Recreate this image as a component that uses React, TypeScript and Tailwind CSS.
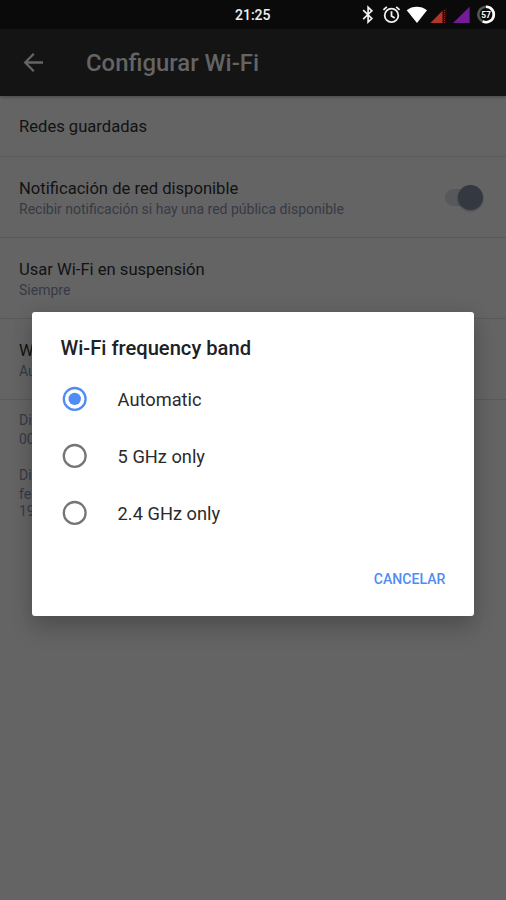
import type { ReactNode } from "react";

function StatusIcons() {
  return (
    <div className="flex h-full items-center">
      <svg width="14" height="20" viewBox="0 0 14 20" fill="none" stroke="#f2f2f2" strokeWidth="1.7">
        <path d="M2.2 5.2 10.8 13.5 7.1 17V2.2L10.8 5.8 2.2 14.1" />
      </svg>
      <svg className="ml-[7px]" width="20" height="20" viewBox="0 0 20 20" fill="none" stroke="#f2f2f2" strokeWidth="1.8">
        <circle cx="9.5" cy="10.4" r="6.8" />
        <path d="M9.5 6.2v4.7l3.2 2M1.4 4.8 4.8 1.8M17.6 4.8 14.2 1.8" />
      </svg>
      <svg className="ml-[4px]" width="22" height="20" viewBox="0 0 22 20">
        <path d="M0.7 5.2C6.5 0.6 15 0.6 21 5.2L11 18Z" fill="#fff" />
      </svg>
      <svg className="ml-[2px]" width="18" height="20" viewBox="0 0 18 20">
        <path d="M16.5 1.8V18H0.3Z" fill="#1f100e" />
        <path d="M12.5 5.8V18H0.3Z" fill="#b53327" />
        <path d="M14.5 5v13" stroke="#8a281f" strokeWidth="1" strokeDasharray="1 1" />
      </svg>
      <svg className="ml-[5px]" width="18" height="20" viewBox="0 0 18 20">
        <path d="M16.6 1.8V18H0Z" fill="#721c96" />
      </svg>
      <svg className="ml-[5px]" width="20" height="20" viewBox="0 0 20 20">
        <circle cx="10" cy="9.5" r="7.7" fill="none" stroke="#555" strokeWidth="2.6" />
        <path d="M10 1.8a7.7 7.7 0 1 1-3.3 14.6" fill="none" stroke="#fff" strokeWidth="2.6" />
        <text x="10" y="12.5" textAnchor="middle" fill="#fff" fontSize="8.4" fontWeight="700" fontFamily="Roboto, sans-serif">57</text>
      </svg>
    </div>
  );
}

function Setting({ title, summary, children }: { title: string; summary?: string; children?: ReactNode }) {
  return (
    <div className={`flex items-center justify-between border-b border-[#595959] pt-[2px] pr-[22px] pl-[19px] ${summary ? "h-[81px]" : "h-[61px]"}`}>
      <div>
        <div className="text-[16.6px] leading-[22px] whitespace-nowrap text-[#111214]">{title}</div>
        {summary && <div className="text-[14px] leading-[19px] text-[#363a45]">{summary}</div>}
      </div>
      {children}
    </div>
  );
}

function Option({ label, checked = false }: { label: string; checked?: boolean }) {
  return (
    <div className="flex h-[57px] items-center">
      <svg width="26" height="26" viewBox="0 0 26 26" fill="none">
        <circle cx="12.7" cy="12.9" r="10.9" stroke={checked ? "#4f8df5" : "#757575"} strokeWidth="2.3" />
        {checked && <circle cx="12.7" cy="12.9" r="6.2" fill="#4f8df5" />}
      </svg>
      <span className="ml-[29.6px] pt-[2px] text-[18.25px] leading-[24px] text-[#2a2b2d]">{label}</span>
    </div>
  );
}

export default function App() {
  return (
    <div className="relative h-[900px] w-[506px] overflow-hidden bg-[#646464] font-['Roboto',sans-serif] antialiased">
      <div className="relative flex h-[29px] items-center justify-end bg-[#0a0a0a] pr-[10px]">
        <span className="absolute left-[235px] text-[14px] leading-[18px] font-medium text-[#f0f0f0]">21:25</span>
        <StatusIcons />
      </div>
      <header className="flex h-[67px] items-center bg-[#141414] pl-[23px] shadow-[0_1px_3px_rgba(0,0,0,0.3)]">
        <svg width="20" height="20" viewBox="0 0 20 20" fill="none" stroke="#646464" strokeWidth="2.3">
          <path d="M20 9.5H2.5M10.8 0.8 2.2 9.5l8.6 8.7" />
        </svg>
        <h1 className="ml-[43px] text-[23.9px] leading-[30px] font-medium text-[#646464]">Configurar Wi-Fi</h1>
      </header>
      <main>
        <Setting title="Redes guardadas" />
        <Setting title="Notificación de red disponible" summary="Recibir notificación si hay una red pública disponible">
          <div className="relative -mt-px h-[26px] w-[40px]">
            <div className="absolute top-[4px] left-[1px] h-[17px] w-[34px] rounded-full bg-[#57585c]" />
            <div className="absolute top-0 right-[1px] h-[25px] w-[25px] rounded-full bg-[#333841] shadow-[0_1px_2px_rgba(0,0,0,0.3)]" />
          </div>
        </Setting>
        <Setting title="Usar Wi-Fi en suspensión" summary="Siempre" />
        <Setting title="Wi-Fi" summary="Auto" />
        <div className="pt-[11px] pl-[19px] text-[14px] leading-[18px] text-[#363a45]">
          <div>Dir</div>
          <div className="pt-px">00:</div>
          <div className="mt-[18px]">Dir</div>
          <div className="pt-px">fe80</div>
          <div className="-mt-px">192</div>
        </div>
      </main>
      <section
        role="dialog"
        className="absolute top-[312px] left-[32px] flex h-[304px] w-[442px] flex-col rounded-[3px] bg-white pt-[24px] shadow-[0_14px_22px_rgba(0,0,0,0.15),0_2px_20px_rgba(0,0,0,0.12)]"
      >
        <h2 className="pl-[28.5px] text-[20.15px] leading-[25px] font-medium text-[#202124]">Wi-Fi frequency band</h2>
        <div className="mt-[9px] pl-[30px]">
          <Option label="Automatic" checked />
          <Option label="5 GHz only" />
          <Option label="2.4 GHz only" />
        </div>
        <div className="mt-[28px] flex justify-end pr-[28.5px]">
          <button className="text-[14.1px] leading-[20px] font-medium text-[#4f8df5]">CANCELAR</button>
        </div>
      </section>
    </div>
  );
}
